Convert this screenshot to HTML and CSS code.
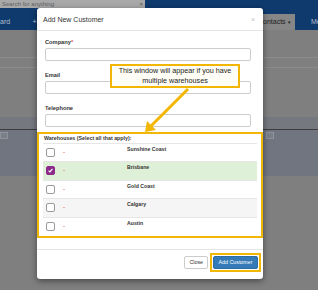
FILE: index.html
```html
<!DOCTYPE html>
<html lang="en">

<head>
	<meta charset="UTF-8">
	<meta name="viewport" content="width=device-width, initial-scale=1.0">
	<title>Add New Customer</title>
	<link rel="stylesheet" href="styles.css">
</head>

<body>
	<div class="page">
		<div class="topbar">
			<div class="search">
				<span>Search for anything</span>
				<span class="search-x">×</span>
			</div>
			<div class="nav">
				<span class="nav-item">ard</span>
				<span class="nav-plus">+</span>
				<span class="nav-spacer"></span>
				<span class="nav-tab">Contacts <span class="caret">▾</span></span>
				<span class="nav-item nav-me">Me</span>
			</div>
		</div>
		<div class="content">
			<div class="gap-a"></div>
			<div class="rule"></div>
			<div class="gap-b"></div>
			<div class="rule"></div>
			<div class="gap-c"></div>
			<div class="band"></div>
			<div class="table-head">
				<span class="mini-select"></span>
				<span class="mini-select"></span>
			</div>
		</div>
	</div>

	<div class="modal">
		<div class="modal-header">
			<span class="modal-title">Add New Customer</span>
			<span class="modal-close">×</span>
		</div>
		<div class="modal-body">
			<div class="field">
				<label>Company<span class="req">*</span></label>
				<div class="input"></div>
			</div>
			<div class="field">
				<label>Email</label>
				<div class="input"></div>
			</div>
			<div class="field">
				<label>Telephone</label>
				<div class="input"></div>
			</div>
		</div>
		<div class="warehouses">
			<div class="wh-title">Warehouses (Select all that apply):</div>
			<div class="wh-row">
				<span class="check"></span>
				<span class="dash">-</span>
				<span class="wh-name">Sunshine Coast</span>
			</div>
			<div class="wh-row selected">
				<span class="check checked">
					<svg viewBox="0 0 10 10" width="9" height="9"><path d="M2.3 5.2 L4.2 7.1 L7.8 2.8" fill="none" stroke="#fff" stroke-width="1.6"/></svg>
				</span>
				<span class="dash">-</span>
				<span class="wh-name">Brisbane</span>
			</div>
			<div class="wh-row">
				<span class="check"></span>
				<span class="dash">-</span>
				<span class="wh-name">Gold Coast</span>
			</div>
			<div class="wh-row striped">
				<span class="check"></span>
				<span class="dash">-</span>
				<span class="wh-name">Calgary</span>
			</div>
			<div class="wh-row">
				<span class="check"></span>
				<span class="dash">-</span>
				<span class="wh-name">Austin</span>
			</div>
		</div>
		<div class="modal-footer">
			<button class="btn">Close</button>
			<div class="highlight">
				<button class="btn btn-primary">Add Customer</button>
			</div>
		</div>
	</div>

	<div class="callout">This window will appear if you have<br>multiple warehouses</div>
	<svg class="callout-arrow" width="318" height="290" viewBox="0 0 318 290">
		<line x1="188" y1="89" x2="151" y2="126" stroke="#f2b705" stroke-width="3"/>
		<polygon points="145,132 156,130 147,121" fill="#f2b705"/>
	</svg>
</body>

</html>
```

FILE: styles.css
```css
body {
	margin: 0;
	font-family: "Liberation Sans", Arial, sans-serif;
	width: 318px;
	height: 290px;
	overflow: hidden;
	position: relative;
}

.page {
	width: 318px;
	height: 290px;
	background-color: #7f7f7f;
	overflow: hidden;
}

/* top header */
.topbar {
	height: 30px;
	background-color: #0e3a6d;
	display: flex;
	flex-direction: column;
}

.search {
	width: 145px;
	height: 8px;
	background-color: #a8a8a8;
	display: flex;
	justify-content: space-between;
	align-items: center;
	padding: 0 2px;
	box-sizing: border-box;
	font-size: 6px;
	line-height: 8px;
	color: #5f5f5f;
}

.search-x {
	color: #555;
}

.nav {
	flex: 1;
	display: flex;
	align-items: flex-end;
	font-size: 7px;
	color: #b4bfcd;
}

.nav-item {
	line-height: 16px;
}

.nav-plus {
	margin-left: 22px;
	line-height: 16px;
	font-size: 8px;
}

.nav-spacer {
	flex: 1;
}

.nav-tab {
	width: 41px;
	height: 16px;
	line-height: 16px;
	background-color: #868686;
	color: #1e1e1e;
	padding-left: 4px;
	box-sizing: border-box;
	white-space: nowrap;
}

.caret {
	font-size: 5px;
}

.nav-me {
	margin-left: 16px;
	width: 7px;
	white-space: nowrap;
}

/* page content under the modal */
.gap-a {
	height: 27px;
}

.rule {
	height: 1px;
	background-color: #8b8b8b;
}

.gap-b {
	height: 9px;
}

.gap-c {
	height: 49px;
}

.band {
	height: 12px;
	background-color: #75787e;
	border-bottom: 1px solid #3c3c3c;
}

.table-head {
	height: 44px;
	background-color: #70757f;
	display: flex;
	justify-content: space-between;
	align-items: flex-start;
	padding: 2px 44px 0 0;
}

.mini-select {
	width: 6px;
	height: 5px;
	border: 1px solid #8e929a;
	background-color: #7b7f88;
}

/* modal */
.modal {
	position: absolute;
	left: 37px;
	top: 8px;
	width: 226px;
	height: 271px;
	background: #fff;
	border-radius: 3px;
	box-shadow: 0 2px 6px rgba(0, 0, 0, 0.45);
}

.modal-header {
	height: 22px;
	padding: 0 8px 0 6px;
	display: flex;
	justify-content: space-between;
	align-items: center;
	border-bottom: 1px solid #e5e5e5;
}

.modal-title {
	font-size: 7px;
	color: #333;
}

.modal-close {
	font-size: 7px;
	color: #c4c4c4;
}

.modal-body {
	padding: 7px 12px 0 8px;
}

.field {
	margin-bottom: 10px;
}

.field:last-child {
	margin-bottom: 0;
}

.field label {
	display: block;
	font-size: 5.7px;
	font-weight: bold;
	line-height: 8px;
	margin-bottom: 2px;
	color: #333;
}

.req {
	color: #d9534f;
}

.input {
	height: 13px;
	border: 1px solid #ccc;
	border-radius: 2px;
	box-sizing: border-box;
}

/* warehouses */
.warehouses {
	margin-top: 5px;
	border: 2px solid #f2b705;
	padding: 0 4px 1px;
}

.wh-title {
	font-size: 5.3px;
	font-weight: bold;
	line-height: 9px;
	color: #333;
	padding-left: 1px;
}

.wh-row {
	height: 18.4px;
	box-sizing: border-box;
	border-top: 1px solid #e6e6e6;
	display: grid;
	grid-template-columns: 17px 64px 1fr;
	align-items: start;
	padding-left: 3px;
}

.wh-row.selected {
	background-color: #dff0d8;
}

.wh-row.striped {
	background-color: #f5f5f5;
}

.check {
	width: 9px;
	height: 9px;
	margin-top: 4px;
	box-sizing: border-box;
	border: 1px solid #9a9a9a;
	border-radius: 2px;
	background: #fff;
}

.check.checked {
	background-color: #8b2c8a;
	border-color: #8b2c8a;
	display: flex;
	align-items: center;
	justify-content: center;
}

.check svg {
	display: block;
}

.dash {
	font-size: 6px;
	font-weight: bold;
	line-height: 8px;
	margin-top: 4px;
	color: #e27a7a;
}

.wh-name {
	font-size: 5.2px;
	font-weight: bold;
	line-height: 7px;
	padding-top: 2px;
	color: #333;
}

/* footer */
.modal-footer {
	margin-top: 11px;
	border-top: 1px solid #e5e5e5;
	padding: 3px 2px 0 0;
	display: flex;
	justify-content: flex-end;
	align-items: center;
	gap: 2px;
}

.highlight {
	border: 2px solid #f2b705;
	padding: 1px;
}

.btn {
	display: block;
	height: 13px;
	padding: 0 4px;
	font-family: "Liberation Sans", Arial, sans-serif;
	font-size: 5.3px;
	border: 1px solid #ccc;
	border-radius: 2px;
	background: #fff;
	color: #333;
}

.btn-primary {
	width: 45px;
	background-color: #337ab7;
	border-color: #2e6da4;
	color: #fff;
}

/* annotation */
.callout {
	position: absolute;
	left: 110px;
	top: 64px;
	width: 130px;
	height: 24px;
	box-sizing: border-box;
	border: 2px solid #f2b705;
	background-color: #fffef6;
	font-size: 7.2px;
	line-height: 9.5px;
	text-align: center;
	color: #222;
}

.callout-arrow {
	position: absolute;
	left: 0;
	top: 0;
}
```
